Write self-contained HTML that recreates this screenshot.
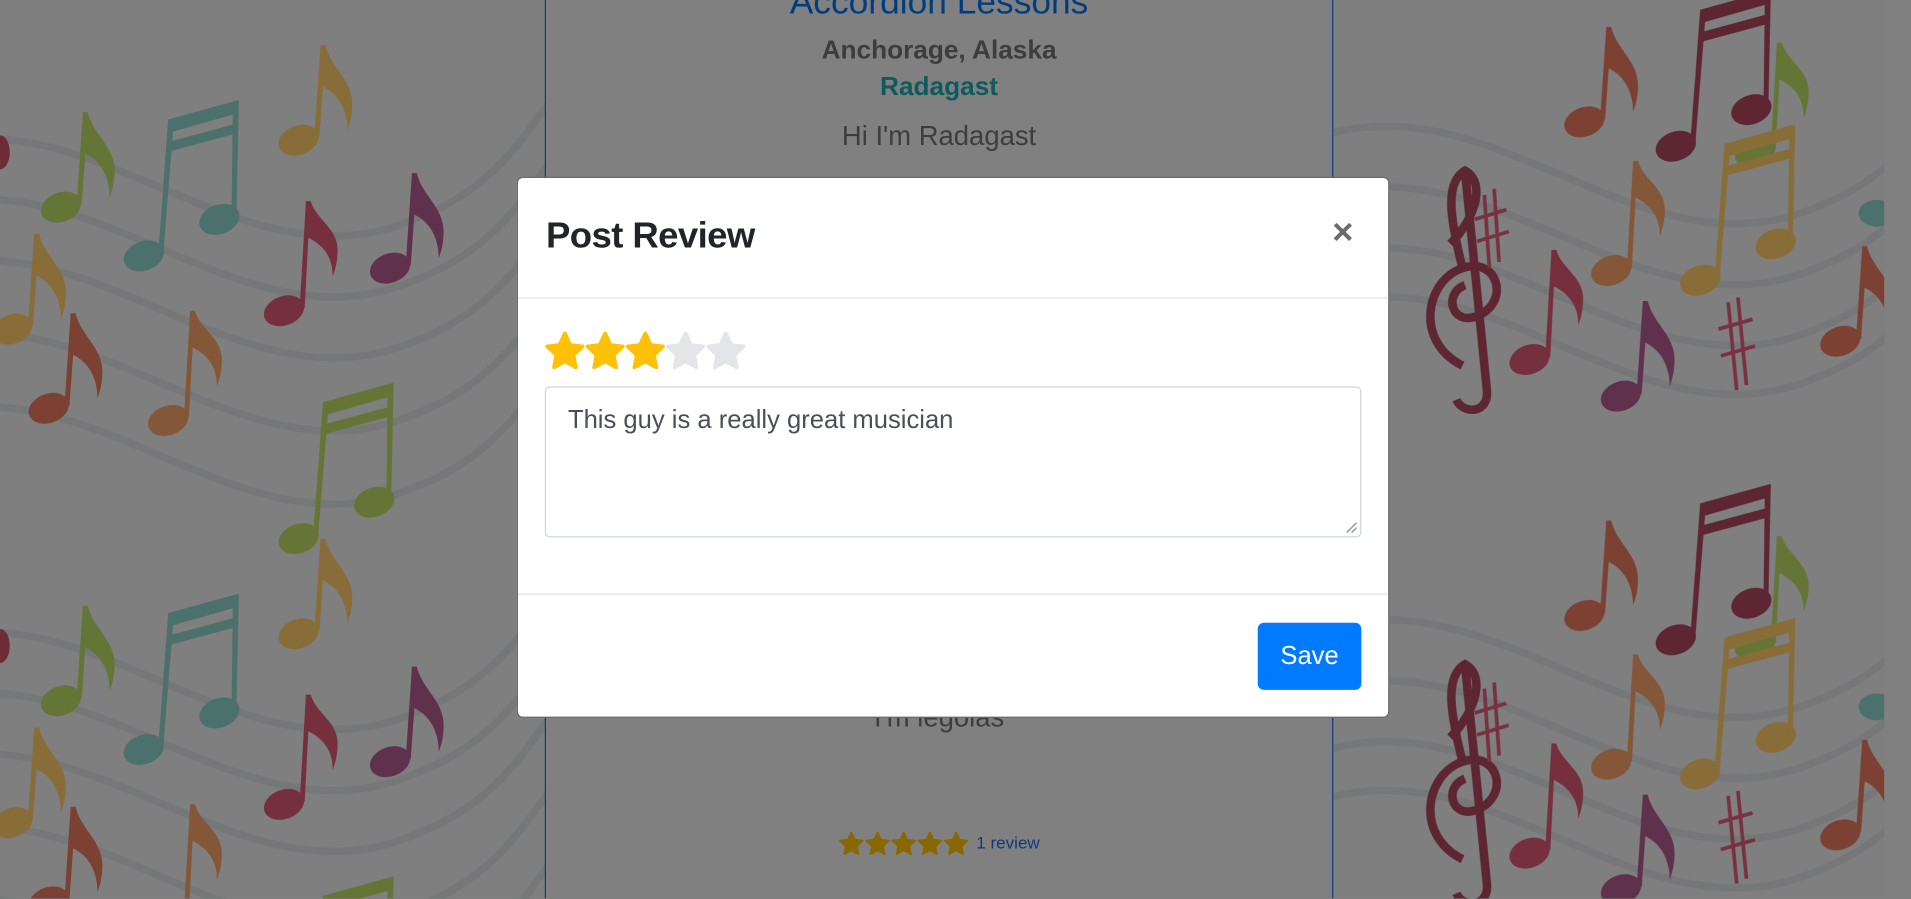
<!DOCTYPE html>
<html><head><meta charset="utf-8">
<style>
html,body{margin:0;padding:0;width:1911px;height:899px;overflow:hidden;background:#808080;}
#outer{position:relative;width:1911px;height:899px;overflow:hidden;}
#w{position:absolute;left:0;top:0;width:1568px;height:737px;overflow:hidden;transform:scale(1.21875);transform-origin:0 0;font-family:"Liberation Sans",sans-serif;}
.bg{position:absolute;left:0;top:0;}
.card{position:absolute;left:447px;top:0;width:645px;height:737px;background:#808080;border-left:1px solid #0c3d82;border-right:1px solid #0c3d82;text-align:center;color:#3d3d3d;overflow:hidden;}
.modal{position:absolute;left:424px;top:145px;width:716px;height:444px;background:#fff;border-radius:5px;border:1px solid #6a6a6a;box-sizing:border-box;}
.title{position:absolute;left:23px;top:31px;font-size:30px;color:#212529;font-weight:bold;letter-spacing:-0.5px;}
.close{position:absolute;left:668px;top:28px;font-size:30px;color:#6c6c6c;font-weight:bold;}
.hr{position:absolute;left:0;width:714px;height:1px;background:#dee2e6;}
.ta{position:absolute;left:22px;top:171px;width:670px;height:124px;border:1px solid #ced4da;border-radius:4px;box-sizing:border-box;}
.ta span{position:absolute;left:18px;top:15px;font-size:21px;color:#495057;}
.btn{position:absolute;left:607px;top:365px;width:85px;height:55px;background:#007bff;border-radius:5px;color:#fff;font-size:21px;text-align:center;line-height:55px;}
</style></head><body>
<div id="outer">
<div id="w">
<svg class="bg" width="1568" height="737" viewBox="0 0 1568 737">
<defs>
<g id="n8"><ellipse cx="0" cy="0" rx="17" ry="12" transform="rotate(-20)"/><path d="M13 -4 L18 -78 L22 -78 C26 -60 44 -50 44 -30 C44 -20 42 -14 40 -8 C40 -20 36 -36 20 -44 L17 -2 Z"/></g>
<g id="n16"><ellipse cx="0" cy="0" rx="17" ry="12" transform="rotate(-20)"/><path d="M13 -4 L18 -90 L22 -90 C26 -75 44 -68 44 -50 C44 -40 42 -34 40 -28 C40 -40 36 -52 20 -60 L17 -2 Z M20 -66 C30 -60 38 -56 40 -48 L38 -46 C34 -54 28 -58 20 -62Z"/></g>
<g id="bm"><ellipse cx="0" cy="0" rx="17" ry="12" transform="rotate(-20)"/><ellipse cx="62" cy="-30" rx="17" ry="12" transform="rotate(-20 62 -30)"/><path d="M12 -4 L20 -112 L78 -128 L76 -34 L72 -34 L73 -116 L24 -102 L16 -2Z M22 -94 L74 -108 L74 -100 L22 -86Z"/></g>
<g id="clef"><path d="M10 60 C-30 40 -20 -10 10 -20 C40 -30 50 10 20 20 C0 26 -5 0 12 -6 M10 -20 C0 -60 -5 -90 12 -100 C30 -90 20 -60 0 -40 M12 -100 L30 80 C32 100 10 100 5 88" fill="none" stroke-width="7"/></g>
<path id="st" d="M-60 0 C80 -40 200 120 340 60 C420 30 440 -30 470 -60" fill="none" stroke="#767778" stroke-width="6"/>
</defs>
<rect width="1546" height="737" fill="#7f7f7f"/>
<g opacity="0.92">
 <g id="L">
  <use href="#st" x="0" y="120"/><use href="#st" x="0" y="170"/><use href="#st" x="0" y="220"/><use href="#st" x="0" y="280"/><use href="#st" x="0" y="340"/>
  <use href="#n8" x="50" y="170" fill="#647531"/>
  <use href="#bm" x="118" y="210" fill="#48706a"/>
  <use href="#n8" x="245" y="115" fill="#8a6c34"/>
  <use href="#n16" x="233" y="255" fill="#76293a"/>
  <use href="#n8" x="320" y="220" fill="#5e2b4a"/>
  <use href="#n8" x="40" y="335" fill="#7d3c2d"/>
  <use href="#n16" x="138" y="345" fill="#855433"/>
  <use href="#bm" x="245" y="442" fill="#657531"/>
  <use href="#n8" x="10" y="270" fill="#8a6c34"/>
  <ellipse cx="0" cy="125" rx="8" ry="14" fill="#6e2535"/>
 </g>
 <use href="#L" x="0" y="405"/>
 <g id="R">
  <use href="#st" x="1150" y="110"/><use href="#st" x="1150" y="160"/><use href="#st" x="1150" y="210"/><use href="#st" x="1150" y="250"/>
  <use href="#bm" x="1375" y="120" fill="#5b1f2c"/>
  <use href="#n16" x="1440" y="125" fill="#647531"/>
  <use href="#n16" x="1322" y="222" fill="#855433"/>
  <use href="#bm" x="1395" y="230" fill="#8a6c34"/>
  <use href="#n16" x="1255" y="295" fill="#76293a"/>
  <use href="#n8" x="1330" y="325" fill="#5e2b4a"/>
  <use href="#n8" x="1510" y="280" fill="#7d3c2d"/>
  <use href="#n8" x="1300" y="100" fill="#7d3c2d"/>
  <ellipse cx="1540" cy="175" rx="15" ry="11" fill="#48706a"/>
  <use href="#clef" x="1190" y="240" stroke="#5b1f2c"/>
  <path d="M1218 160 L1222 220 M1226 155 L1230 215 M1210 180 L1236 172 M1212 198 L1238 190 M1418 248 L1425 320 M1426 244 L1433 316 M1410 270 L1438 262 M1412 292 L1440 284" stroke="#7a2a3c" stroke-width="3"/>
 </g>
 <use href="#R" x="0" y="405"/>
</g>
<rect x="1546" width="22" height="737" fill="#808080"/>
</svg>

<div class="card">
 <div style="position:absolute;left:0;right:0;top:-14px;font-size:29px;color:#003d80;">Accordion Lessons</div>
 <div style="position:absolute;left:0;right:0;top:29px;font-size:21.5px;font-weight:bold;">Anchorage, Alaska</div>
 <div style="position:absolute;left:0;right:0;top:59px;font-size:21.5px;font-weight:bold;color:#0e5a60;">Radagast</div>
 <div style="position:absolute;left:0;right:0;top:99px;font-size:22.5px;">Hi I'm Radagast</div>
 <div style="position:absolute;left:0;right:0;top:576px;font-size:22.5px;">I'm legolas</div>
 <svg style="position:absolute;left:240px;top:682px" width="110" height="20" viewBox="0 0 110 20">
  <defs><path id="ss" d="M10.5 1 L13.3 7 L19.8 7.8 L15 12.3 L16.3 18.8 L10.5 15.6 L4.7 18.8 L6 12.3 L1.2 7.8 L7.7 7 Z" fill="#8a6800" stroke="#8a6800" stroke-width="1.5" stroke-linejoin="round"/></defs>
  <use href="#ss" x="0"/><use href="#ss" x="21.5"/><use href="#ss" x="43"/><use href="#ss" x="64.5"/><use href="#ss" x="86"/>
 </svg>
 <div style="position:absolute;left:353px;top:683px;font-size:14px;color:#0e3a7d;">1 review</div>
</div>

<div class="modal">
 <div class="title">Post Review</div>
 <div class="close">×</div>
 <div class="hr" style="top:98px"></div>
 <svg style="position:absolute;left:22px;top:126px" width="170" height="34" viewBox="0 0 170 34">
  <defs><path id="s" d="M16.5 1.5 L21 11 L31 12.3 L23.6 19.3 L25.5 29.5 L16.5 24.5 L7.5 29.5 L9.4 19.3 L2 12.3 L12 11 Z" stroke-linejoin="round" stroke-width="3"/></defs>
  <use href="#s" x="0" fill="#ffc107" stroke="#ffc107"/>
  <use href="#s" x="33" fill="#ffc107" stroke="#ffc107"/>
  <use href="#s" x="66" fill="#ffc107" stroke="#ffc107"/>
  <use href="#s" x="99" fill="#e4e5e9" stroke="#e4e5e9"/>
  <use href="#s" x="132" fill="#e4e5e9" stroke="#e4e5e9"/>
 </svg>
 <div class="ta"><span>This guy is a really great musician</span>
  <svg style="position:absolute;right:2px;bottom:2px" width="10" height="10"><path d="M1 9 L9 1 M5 9 L9 5" stroke="#888" stroke-width="1"/></svg>
 </div>
 <div class="hr" style="top:341px"></div>
 <div class="btn">Save</div>
</div>
</div>
</div>
</body></html>
